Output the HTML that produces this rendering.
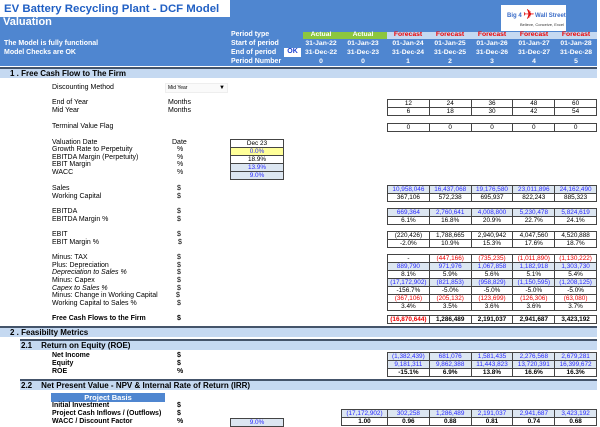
<!DOCTYPE html>
<html><head><meta charset="utf-8"><style>
*{margin:0;padding:0;box-sizing:border-box}
body{width:600px;height:427px;overflow:hidden;background:#fff;font-family:"Liberation Sans",Arial,sans-serif;font-size:7px;color:#000;position:relative}
.a{position:absolute;white-space:nowrap;line-height:8px}
.b{font-weight:bold}
.w{color:#fff}
table{position:absolute;border-collapse:collapse;border:1.5px solid #333;table-layout:fixed}
td{border:1px solid #444;height:7.7px;line-height:7px;font-size:6.4px;text-align:center;vertical-align:middle;padding:0;white-space:nowrap}
.bl td{background:#dce6f1;color:#2a2aff}
.rd td{color:#e00}
.bd td{font-weight:bold}
.bar{position:absolute;left:0;width:597px;height:11px;background:#c5d9f1;border-top:2px solid #44546a;font-weight:bold;font-size:8px;line-height:9px}
.hc{position:absolute;width:42px;text-align:center;font-weight:bold;color:#fff;line-height:8px;font-size:6.8px}
</style></head><body>
<div class="a" style="left:0;top:0;width:597px;height:66px;background:#4f86d0"></div>
<div class="a" style="left:0;top:0;width:230px;height:17px;background:#fff"></div>
<div class="a b" style="left:4px;top:3px;font-size:11.4px;line-height:12px;color:#2160c4">EV Battery Recycling Plant - DCF Model</div>
<div class="a b w" style="left:3px;top:16px;font-size:11px;line-height:12px">Valuation</div>
<div class="a b w" style="left:4px;top:40px">The Model is fully functional</div>
<div class="a b w" style="left:4px;top:49px">Model Checks are OK</div>
<div class="a b w" style="left:231px;top:31px">Period type</div>
<div class="a b w" style="left:231px;top:40px">Start of period</div>
<div class="a b w" style="left:231px;top:49px">End of period</div>
<div class="a b w" style="left:231px;top:58px">Period Number</div>
<div class="a b" style="left:284px;top:48px;width:17px;height:9px;background:#fff;color:#1a3fd0;text-align:center">OK</div>
<div class="a" style="left:501px;top:5px;width:65px;height:26px;background:#fff"></div>
<div class="a b" style="left:507px;top:12px;font-size:6px;color:#3a6cc8">Big 4</div>
<div class="a" style="left:523px;top:7px;font-size:14px;color:#e01010;line-height:14px">✈</div>
<div class="a b" style="left:535px;top:12px;font-size:6px;color:#3a6cc8">Wall Street</div>
<div class="a" style="left:520px;top:21px;font-size:4px;color:#333">Believe, Conceive, Excel</div>
<div class="a" style="left:387px;top:32px;width:210px;height:7px;background:#c5d9f1"></div>
<div class="a" style="left:303px;top:32px;width:84px;height:7px;background:#8cc63f"></div>
<div class="hc" style="left:300px;top:31px">Actual</div><div class="hc" style="left:342px;top:31px">Actual</div>
<div class="hc" style="left:387px;top:31px;color:#e00">Forecast</div><div class="hc" style="left:429px;top:31px;color:#e00">Forecast</div><div class="hc" style="left:471px;top:31px;color:#e00">Forecast</div><div class="hc" style="left:513px;top:31px;color:#e00">Forecast</div><div class="hc" style="left:555px;top:31px;color:#e00">Forecast</div>
<div class="hc" style="left:300px;top:40px">31-Jan-22</div><div class="hc" style="left:342px;top:40px">01-Jan-23</div><div class="hc" style="left:387px;top:40px">01-Jan-24</div><div class="hc" style="left:429px;top:40px">01-Jan-25</div><div class="hc" style="left:471px;top:40px">01-Jan-26</div><div class="hc" style="left:513px;top:40px">01-Jan-27</div><div class="hc" style="left:555px;top:40px">01-Jan-28</div>
<div class="hc" style="left:300px;top:49px">31-Dec-22</div><div class="hc" style="left:342px;top:49px">31-Dec-23</div><div class="hc" style="left:387px;top:49px">31-Dec-24</div><div class="hc" style="left:429px;top:49px">31-Dec-25</div><div class="hc" style="left:471px;top:49px">31-Dec-26</div><div class="hc" style="left:513px;top:49px">31-Dec-27</div><div class="hc" style="left:555px;top:49px">31-Dec-28</div>
<div class="hc" style="left:300px;top:58px">0</div><div class="hc" style="left:342px;top:58px">0</div><div class="hc" style="left:387px;top:58px">1</div><div class="hc" style="left:429px;top:58px">2</div><div class="hc" style="left:471px;top:58px">3</div><div class="hc" style="left:513px;top:58px">4</div><div class="hc" style="left:555px;top:58px">5</div>

<div class="bar" style="top:67px"><span style="margin-left:10px">1 . Free Cash Flow to The Firm</span></div>

<div class="a" style="left:52px;top:84px">Discounting Method</div>
<div class="a" style="left:165px;top:83px;width:63px;height:10px;background:#fafafa;border:1px solid #eee;font-size:5px;line-height:8px;padding-left:2px">Mid Year<span style="position:absolute;right:2px;top:0;font-size:6px">▼</span></div>
<div class="a" style="left:52px;top:99px">End of Year</div><div class="a" style="left:168px;top:99px">Months</div>
<div class="a" style="left:52px;top:107px">Mid Year</div><div class="a" style="left:168px;top:107px">Months</div>
<div class="a" style="left:52px;top:123px">Terminal Value Flag</div>
<table style="left:387px;top:99px;width:210px"><tr><td>12</td><td>24</td><td>36</td><td>48</td><td>60</td></tr><tr><td>6</td><td>18</td><td>30</td><td>42</td><td>54</td></tr></table>
<table style="left:387px;top:123px;width:210px"><tr><td>0</td><td>0</td><td>0</td><td>0</td><td>0</td></tr></table>

<div class="a" style="left:52px;top:139px">Valuation Date</div><div class="a" style="left:172px;top:139px">Date</div>
<div class="a" style="left:52px;top:146px">Growth Rate to Perpetuity</div><div class="a" style="left:177px;top:146px">%</div>
<div class="a" style="left:52px;top:154px">EBITDA Margin (Perpetuity)</div><div class="a" style="left:177px;top:154px">%</div>
<div class="a" style="left:52px;top:161px">EBIT Margin</div><div class="a" style="left:177px;top:161px">%</div>
<div class="a" style="left:52px;top:169px">WACC</div><div class="a" style="left:177px;top:169px">%</div>
<table style="left:230px;top:139px;width:54px"><tr><td>Dec 23</td></tr><tr><td style="background:#ffff99;color:#2a2aff">0.0%</td></tr><tr><td>18.9%</td></tr><tr class="bl"><td>13.9%</td></tr><tr class="bl"><td>9.0%</td></tr></table>

<div class="a" style="left:52px;top:185px">Sales</div><div class="a" style="left:177px;top:185px">$</div>
<div class="a" style="left:52px;top:193px">Working Capital</div><div class="a" style="left:177px;top:193px">$</div>
<table style="left:387px;top:185px;width:210px"><tr class="bl"><td>10,958,046</td><td>16,437,068</td><td>19,176,580</td><td>23,011,896</td><td>24,162,490</td></tr><tr><td>367,106</td><td>572,238</td><td>695,937</td><td>822,243</td><td>885,323</td></tr></table>
<div class="a" style="left:52px;top:208px">EBITDA</div><div class="a" style="left:177px;top:208px">$</div>
<div class="a" style="left:52px;top:216px">EBITDA Margin %</div><div class="a" style="left:177px;top:216px">$</div>
<table style="left:387px;top:208px;width:210px"><tr class="bl"><td>669,364</td><td>2,760,641</td><td>4,008,800</td><td>5,230,478</td><td>5,824,619</td></tr><tr><td>6.1%</td><td>16.8%</td><td>20.9%</td><td>22.7%</td><td>24.1%</td></tr></table>
<div class="a" style="left:52px;top:231px">EBIT</div><div class="a" style="left:177px;top:231px">$</div>
<div class="a" style="left:52px;top:239px">EBIT Margin %</div><div class="a" style="left:178px;top:239px">$</div>
<table style="left:387px;top:231px;width:210px"><tr><td>(220,426)</td><td>1,788,665</td><td>2,940,942</td><td>4,047,560</td><td>4,520,888</td></tr><tr><td>-2.0%</td><td>10.9%</td><td>15.3%</td><td>17.6%</td><td>18.7%</td></tr></table>

<div class="a" style="left:52px;top:254px">Minus: TAX</div><div class="a" style="left:177px;top:254px">$</div>
<div class="a" style="left:52px;top:262px">Plus: Depreciation</div><div class="a" style="left:177px;top:262px">$</div>
<div class="a" style="left:52px;top:269px;font-style:italic">Depreciation to Sales %</div><div class="a" style="left:177px;top:269px">$</div>
<div class="a" style="left:52px;top:277px">Minus: Capex</div><div class="a" style="left:177px;top:277px">$</div>
<div class="a" style="left:52px;top:285px;font-style:italic">Capex to Sales %</div><div class="a" style="left:177px;top:285px">$</div>
<div class="a" style="left:52px;top:292px">Minus: Change in Working Capital</div><div class="a" style="left:176px;top:292px">$</div>
<div class="a" style="left:52px;top:300px">Working Capital to Sales %</div><div class="a" style="left:177px;top:300px">$</div>
<table style="left:387px;top:254px;width:210px">
<tr class="rd"><td style="color:#000">-</td><td>(447,166)</td><td>(735,235)</td><td>(1,011,890)</td><td>(1,130,222)</td></tr>
<tr class="bl"><td>889,790</td><td>971,976</td><td>1,067,858</td><td>1,182,918</td><td>1,303,730</td></tr>
<tr><td>8.1%</td><td>5.9%</td><td>5.6%</td><td>5.1%</td><td>5.4%</td></tr>
<tr class="bl"><td>(17,172,902)</td><td>(821,853)</td><td>(958,829)</td><td>(1,150,595)</td><td>(1,208,125)</td></tr>
<tr><td>-156.7%</td><td>-5.0%</td><td>-5.0%</td><td>-5.0%</td><td>-5.0%</td></tr>
<tr class="rd"><td>(367,106)</td><td>(205,132)</td><td>(123,699)</td><td>(126,306)</td><td>(63,080)</td></tr>
<tr><td>3.4%</td><td>3.5%</td><td>3.6%</td><td>3.6%</td><td>3.7%</td></tr></table>
<div class="a b" style="left:52px;top:315px">Free Cash Flows to the Firm</div><div class="a b" style="left:177px;top:315px">$</div>
<table style="left:387px;top:315px;width:210px" class="bd"><tr class="bd"><td style="color:#e00">(16,870,644)</td><td>1,286,489</td><td>2,191,037</td><td>2,941,687</td><td>3,423,192</td></tr></table>

<div class="bar" style="top:326px"><span style="margin-left:10px">2 . Feasibilty Metrics</span></div>
<div class="bar" style="top:339px;left:20px;width:577px"><span style="margin-left:1px">2.1</span><span style="margin-left:9px">Return on Equity (ROE)</span></div>
<div class="a b" style="left:52px;top:352px">Net Income</div><div class="a b" style="left:177px;top:352px">$</div>
<div class="a b" style="left:52px;top:360px">Equity</div><div class="a b" style="left:177px;top:360px">$</div>
<div class="a b" style="left:52px;top:368px">ROE</div><div class="a b" style="left:177px;top:368px">%</div>
<table style="left:387px;top:352px;width:210px"><tr class="bl"><td>(1,382,439)</td><td>681,076</td><td>1,581,435</td><td>2,276,568</td><td>2,679,281</td></tr><tr class="bl"><td>9,181,311</td><td>9,862,388</td><td>11,443,823</td><td>13,720,391</td><td>16,399,672</td></tr><tr class="bd"><td>-15.1%</td><td>6.9%</td><td>13.8%</td><td>16.6%</td><td>16.3%</td></tr></table>
<div class="bar" style="top:379px;left:20px;width:577px"><span style="margin-left:1px">2.2</span><span style="margin-left:9px">Net Present Value - NPV &amp; Internal Rate of Return (IRR)</span></div>
<div class="a b w" style="left:51px;top:393px;width:114px;height:9px;background:#4f86d0;text-align:center;font-size:7.5px;line-height:9px">Project Basis</div>
<div class="a b" style="left:52px;top:402px">Initial Investment</div><div class="a b" style="left:177px;top:402px">$</div>
<div class="a b" style="left:52px;top:410px">Project Cash Inflows / (Outflows)</div><div class="a b" style="left:177px;top:410px">$</div>
<div class="a b" style="left:52px;top:418px">WACC / Discount Factor</div><div class="a b" style="left:177px;top:418px">%</div>
<table style="left:230px;top:418px;width:54px"><tr class="bl"><td>9.0%</td></tr></table>
<table style="left:341px;top:409px;width:256px"><colgroup><col style="width:46px"><col><col><col><col><col></colgroup><tr class="bl"><td>(17,172,902)</td><td>302,258</td><td>1,286,489</td><td>2,191,037</td><td>2,941,687</td><td>3,423,192</td></tr><tr class="bd"><td>1.00</td><td>0.96</td><td>0.88</td><td>0.81</td><td>0.74</td><td>0.68</td></tr></table>
</body></html>
